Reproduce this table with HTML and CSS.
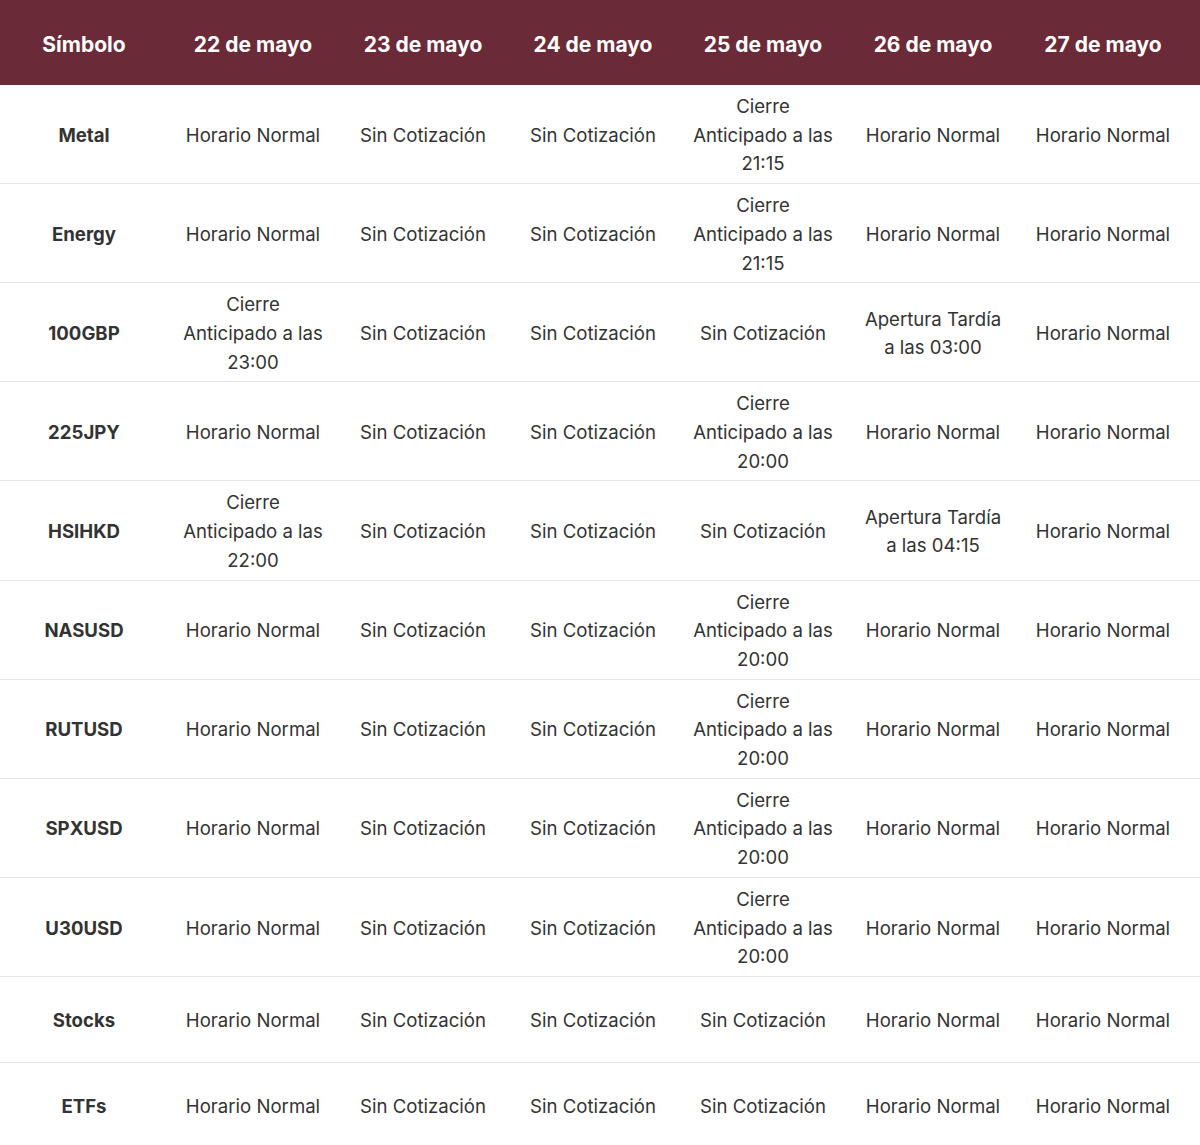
FILE: index.html
```html
<!DOCTYPE html>
<html lang="es">
<head>
<meta charset="utf-8">
<link rel="stylesheet" href="styles.css">
</head>
<body>
<table class="sched">
<thead>
<tr><th class="c-first">Símbolo</th><th>22 de mayo</th><th>23 de mayo</th><th>24 de mayo</th><th>25 de mayo</th><th>26 de mayo</th><th class="c-last">27 de mayo</th></tr>
</thead>
<tbody>
<tr><td class="sym">Metal</td><td>Horario Normal</td><td>Sin Cotización</td><td>Sin Cotización</td><td>Cierre Anticipado a las 21:15</td><td>Horario Normal</td><td>Horario Normal</td></tr>
<tr><td class="sym">Energy</td><td>Horario Normal</td><td>Sin Cotización</td><td>Sin Cotización</td><td>Cierre Anticipado a las 21:15</td><td>Horario Normal</td><td>Horario Normal</td></tr>
<tr><td class="sym">100GBP</td><td>Cierre Anticipado a las 23:00</td><td>Sin Cotización</td><td>Sin Cotización</td><td>Sin Cotización</td><td>Apertura Tardía a las 03:00</td><td>Horario Normal</td></tr>
<tr><td class="sym">225JPY</td><td>Horario Normal</td><td>Sin Cotización</td><td>Sin Cotización</td><td>Cierre Anticipado a las 20:00</td><td>Horario Normal</td><td>Horario Normal</td></tr>
<tr><td class="sym">HSIHKD</td><td>Cierre Anticipado a las 22:00</td><td>Sin Cotización</td><td>Sin Cotización</td><td>Sin Cotización</td><td>Apertura Tardía a las 04:15</td><td>Horario Normal</td></tr>
<tr><td class="sym">NASUSD</td><td>Horario Normal</td><td>Sin Cotización</td><td>Sin Cotización</td><td>Cierre Anticipado a las 20:00</td><td>Horario Normal</td><td>Horario Normal</td></tr>
<tr><td class="sym">RUTUSD</td><td>Horario Normal</td><td>Sin Cotización</td><td>Sin Cotización</td><td>Cierre Anticipado a las 20:00</td><td>Horario Normal</td><td>Horario Normal</td></tr>
<tr><td class="sym">SPXUSD</td><td>Horario Normal</td><td>Sin Cotización</td><td>Sin Cotización</td><td>Cierre Anticipado a las 20:00</td><td>Horario Normal</td><td>Horario Normal</td></tr>
<tr><td class="sym">U30USD</td><td>Horario Normal</td><td>Sin Cotización</td><td>Sin Cotización</td><td>Cierre Anticipado a las 20:00</td><td>Horario Normal</td><td>Horario Normal</td></tr>
<tr><td class="sym">Stocks</td><td>Horario Normal</td><td>Sin Cotización</td><td>Sin Cotización</td><td>Sin Cotización</td><td>Horario Normal</td><td>Horario Normal</td></tr>
<tr><td class="sym">ETFs</td><td>Horario Normal</td><td>Sin Cotización</td><td>Sin Cotización</td><td>Sin Cotización</td><td>Horario Normal</td><td>Horario Normal</td></tr>
</tbody>
</table>
</body>
</html>
```
FILE: styles.css
```css
html, body {
  margin: 0;
  padding: 0;
  background: #ffffff;
}
body {
  font-family: Inter, "Noto Sans", "Liberation Sans", sans-serif;
  color: #333333;
}
.sched {
  width: 1200px;
  border-collapse: collapse;
  table-layout: fixed;
}
.sched th {
  width: 170px;
  background: #6b2a37;
  color: #ffffff;
  font-size: 21px;
  font-weight: 700;
  height: 85px;
  padding: 3px 8px 0;
  text-align: center;
  vertical-align: middle;
  box-sizing: border-box;
}
.sched th.c-first {
  width: 168px;
}
.sched th.c-last {
  width: 182px;
  padding-right: 20px;
}
.sched td {
  font-size: 18.6px;
  line-height: 28.7px;
  height: 86px;
  padding: 7px 13px 5px;
  text-align: center;
  vertical-align: middle;
  border-top: 1px solid #e8e8e8;
  box-sizing: border-box;
}
.sched td:last-child {
  padding-right: 25px;
}
.sched tbody tr:first-child td {
  border-top: none;
}
.sched td.sym {
  font-weight: 700;
  font-size: 18.6px;
  padding-left: 10px;
  padding-right: 10px;
}
```
